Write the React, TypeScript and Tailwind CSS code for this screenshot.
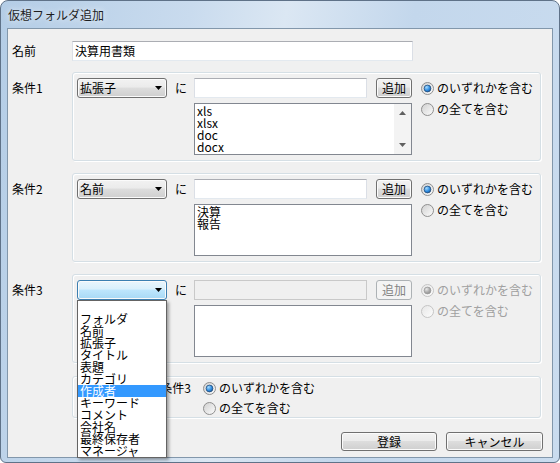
import React, { useId } from 'react';

const fieldTypes = [
  '',
  'フォルダ',
  '名前',
  '拡張子',
  'タイトル',
  '表題',
  'カテゴリ',
  '作成者',
  'キーワード',
  'コメント',
  '会社名',
  '最終保存者',
  'マネージャ',
];

const Radio: React.FC<{ checked?: boolean; disabled?: boolean }> = ({ checked, disabled }) => {
  const id = useId();
  return (
    <svg width="13" height="13" viewBox="0 0 13 13" className="shrink-0">
      <defs>
        <linearGradient id={`${id}r`} x1="0" y1="0" x2="1" y2="1">
          <stop offset="0" stopColor={disabled ? '#e6e6e6' : '#cfcfcf'} />
          <stop offset="1" stopColor="#fdfdfd" />
        </linearGradient>
        <radialGradient id={`${id}d`} cx="0.35" cy="0.3" r="0.8">
          <stop offset="0" stopColor={disabled ? '#e8e8e8' : '#a6dcff'} />
          <stop offset="0.6" stopColor={disabled ? '#a8a8a8' : '#2d8be0'} />
          <stop offset="1" stopColor={disabled ? '#8c8c8c' : '#1b4f8c'} />
        </radialGradient>
      </defs>
      <circle cx="6.5" cy="6.5" r="6" fill={`url(#${id}r)`} stroke={disabled ? '#c4c4c4' : '#8f8f8f'} />
      {checked && <circle cx="6.5" cy="6.5" r="3.4" fill={`url(#${id}d)`} stroke={disabled ? '#9a9a9a' : '#244f7e'} strokeWidth="0.8" />}
    </svg>
  );
};

const Arrow: React.FC<{ up?: boolean; color?: string }> = ({ up, color = '#000' }) => (
  <svg width="7" height="4" viewBox="0 0 7 4">
    <path d={up ? 'M0 4h7L3.5 0z' : 'M0 0h7L3.5 4z'} fill={color} />
  </svg>
);

const Combo: React.FC<{ label: string; open?: boolean }> = ({ label, open }) => (
  <div
    className={`flex h-[20px] w-[90px] shrink-0 items-center justify-between rounded-[3px] border pl-[2px] pr-[4px] shadow-[inset_0_0_0_1px_#fbfbfb] ${
      open
        ? 'border-[#3c7fb1] bg-[linear-gradient(#eaf6fd_0%,#d9f0fc_45%,#bee6fd_50%,#a7d9f5_100%)]'
        : 'border-[#707070] bg-[linear-gradient(#f2f2f2_0%,#ebebeb_45%,#dddddd_50%,#cfcfcf_100%)]'
    }`}
  >
    <span className="leading-[18px]">{label}</span>
    <Arrow />
  </div>
);

const Button: React.FC<{ label: string; disabled?: boolean; className?: string }> = ({ label, disabled, className }) => (
  <div
    className={`flex items-center justify-center rounded-[3px] border leading-[16px] ${
      disabled
        ? 'border-[#adb2b5] bg-[#f4f4f4] text-[#838383]'
        : 'border-[#707070] bg-[linear-gradient(#f2f2f2_0%,#ebebeb_45%,#dddddd_50%,#cfcfcf_100%)] shadow-[inset_0_0_0_1px_#fbfbfb]'
    } ${className ?? ''}`}
  >
    {label}
  </div>
);

const RadioRow: React.FC<{ label: string; checked?: boolean; disabled?: boolean; className?: string }> = ({
  label,
  checked,
  disabled,
  className,
}) => (
  <div className={`flex h-[20px] items-center gap-[3px] ${disabled ? 'text-[#a0a0a0]' : ''} ${className ?? ''}`}>
    <Radio checked={checked} disabled={disabled} />
    <span className="leading-[20px]">{label}</span>
  </div>
);

const ConditionGroup: React.FC<{
  label: string;
  field: string;
  items: string[];
  scroll?: boolean;
  disabled?: boolean;
  open?: boolean;
}> = ({ label, field, items, scroll, disabled, open }) => (
  <div className="mt-[12px] flex">
    <div className="mt-[6px] w-[64px] pl-[4px] leading-[20px]">{label}</div>
    <div className="flex h-[89px] w-[469px] rounded-[3px] border border-[#d5dfe5] pl-[4px] pt-[5px] shadow-[inset_1px_1px_0_#fff,1px_1px_0_#fff]">
      <Combo label={field} open={open} />
      <div className="ml-[8px] w-[12px] leading-[20px]">に</div>
      <div className="ml-[7px] flex w-[218px] flex-col">
        <div className="flex items-center justify-between">
          <div
            className={`h-[20px] w-[173px] border ${
              disabled
                ? 'border-[#c9c9c9] bg-[#f0f0f0]'
                : 'border-[#dbdfe6] border-t-[#abadb3] border-b-[#e3e9ef] bg-white'
            }`}
          />
          <Button label="追加" disabled={disabled} className="h-[20px] w-[36px]" />
        </div>
        <div className="mt-[5px] flex h-[52px] border border-[#828790] bg-white">
          <div className="flex-1 pl-[2px] pt-[1px] leading-[12px]">
            {items.map((it) => (
              <div key={it} className="h-[12px]">
                {it}
              </div>
            ))}
          </div>
          {scroll && (
            <div className="flex w-[17px] flex-col items-center justify-between bg-[#f3f3f3] py-[7px]">
              <Arrow up color="#606060" />
              <Arrow color="#606060" />
            </div>
          )}
        </div>
      </div>
      <div className="ml-[9px] flex flex-col">
        <RadioRow label="のいずれかを含む" checked disabled={disabled} />
        <RadioRow label="の全てを含む" disabled={disabled} className="mt-[1px]" />
      </div>
    </div>
  </div>
);

const App: React.FC = () => {
  return (
    <div className="h-[463px] w-[560px] bg-white font-['Noto_Sans_CJK_JP','Noto_Sans',sans-serif] text-[12px] text-black">
      <div className="flex h-[463px] flex-col rounded-t-[8px] rounded-b-[6px] border border-[#5f7288] bg-[linear-gradient(100deg,#b4cde6_0%,#c9dbee_30%,#dbe7f3_45%,#c3d7ec_65%,#cadcef_100%)]">
        <div className="flex h-[27px] items-center px-[7px] text-[#1e1e1e] [text-shadow:0_0_6px_#fff]">
          仮想フォルダ追加
        </div>
        <div className="relative mx-[6px] mb-[4px] flex-1 border border-[#8297ab] bg-[#f0f0f0]">
          <div className="mt-[12px] flex items-center">
            <div className="w-[64px] pl-[4px] leading-[20px]">名前</div>
            <div className="flex h-[20px] w-[341px] items-center border border-[#dbdfe6] border-t-[#abadb3] border-b-[#e3e9ef] bg-white pl-[2px] leading-[18px]">
              決算用書類
            </div>
          </div>
          <div className="-mt-[1px]">
            <ConditionGroup label="条件1" field="拡張子" items={['xls', 'xlsx', 'doc', 'docx']} scroll />
          </div>
          <ConditionGroup label="条件2" field="名前" items={['決算', '報告']} />
          <ConditionGroup label="条件3" field="" items={[]} disabled open />

          <div className="ml-[64px] mt-[13px] flex h-[42px] w-[469px] rounded-[3px] border border-[#d5dfe5] pt-[1px] shadow-[inset_1px_1px_0_#fff,1px_1px_0_#fff]">
            <div className="w-[118px] text-right leading-[20px]">条件1～条件3</div>
            <div className="ml-[12px] flex flex-col">
              <RadioRow label="のいずれかを含む" checked />
              <RadioRow label="の全てを含む" />
            </div>
          </div>

          <div className="mt-[14px] flex justify-end gap-[9px] pr-[9px]">
            <Button label="登録" className="h-[19px] w-[96px]" />
            <Button label="キャンセル" className="h-[19px] w-[97px]" />
          </div>

          <div className="absolute left-[69px] top-[271px] w-[90px] border border-[#646464] bg-white shadow-[2px_2px_3px_rgba(0,0,0,0.35)]">
            {fieldTypes.map((f, i) => (
              <div
                key={i}
                className={`h-[12px] whitespace-nowrap pl-[2px] leading-[12px] ${
                  f === '作成者' ? 'bg-[#3399ff] text-white' : ''
                }`}
              >
                {f}
              </div>
            ))}
          </div>
        </div>
      </div>
    </div>
  );
};

export default App;
